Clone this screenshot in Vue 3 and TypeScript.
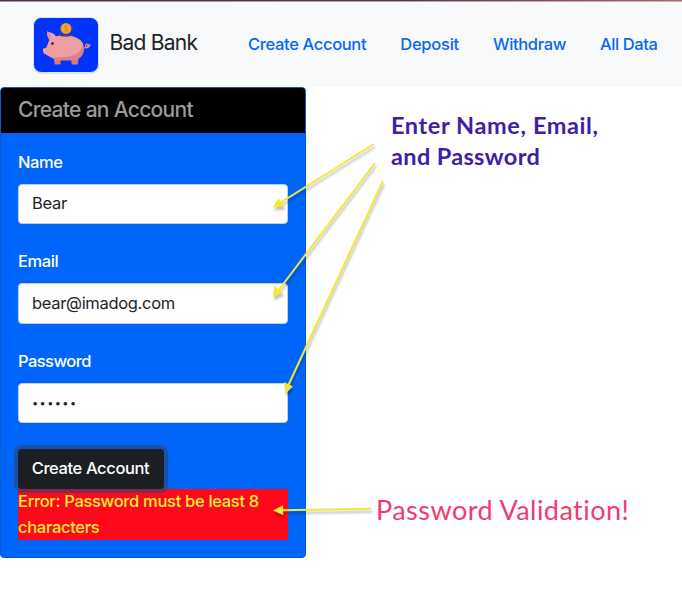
<script setup lang="ts">
import { ref } from 'vue'

interface Link {
  label: string
  cls: string
}
interface Arrow {
  line: number[]
  head: string
}

const links: Link[] = [
  { label: 'Create Account', cls: 'create' },
  { label: 'Deposit', cls: 'deposit' },
  { label: 'Withdraw', cls: 'withdraw' },
  { label: 'All Data', cls: 'all' },
]
const name = ref('Bear')
const email = ref('bear@imadog.com')
const password = ref('••••••')

const arrows: Arrow[] = [
  { line: [374, 144, 280, 203], head: '273,207.5 278.5,198 284.5,206.5' },
  { line: [375, 163, 278, 291], head: '273,297.5 274.5,286 283,292.5' },
  { line: [383, 181, 288, 386], head: '285.5,393.5 284,382 293,386.5' },
  { line: [371, 508.7, 281, 510.3], head: '273,510.5 283,505.2 283.3,515.3' },
]
</script>

<template>
  <div class="page">
    <nav class="navbar">
      <a class="brand" href="#">
        <svg class="logo" width="66" height="56" viewBox="0 0 66 56">
          <rect x="0.5" y="0.5" width="65" height="55" rx="8" fill="#0034fa" stroke="#dde3f3" />
          <path d="M50.5 30.5c2 .8 4 .2 4.500-1.500.5-1.500-1.500-2.500-2.300-1-.8 1.300.5 3 2 2.500 1.300-.4 2-1.500 2.500-3M55.500 27.500l1.800 1.300" fill="none" stroke="#e58f9b" stroke-width="1.200" />
          <path d="M20.500 37h7v9.500c0 .8-.5 1-1 1h-4c-.7 0-1-.4-1-1zM38 37h8l-1 9.500c0 .7-.4 1-1 1h-4.500c-.6 0-1-.3-1-1z" fill="#d87983" />
          <path d="M16 24c3-4 8-5.500 15-5.500 12 0 20 4.500 20 13.500 0 7-5 11.500-14 11.500H25c-4 0-6-3-8-5l-5-2c-1.500-.6-2-2-2-5 1.500-.3 3.500-.5 4-2.500z" fill="#d98089" />
          <path d="M16 24c3-4 8-5.500 15-5.500 10 0 17 3.500 19 8.500-1 8-9 13-18 13-7 0-10 .5-13 1l-7-4c-1.500-.6-2-2-2-5 1.500-.3 3.500-.5 4-2.500z" fill="#eda0a3" />
          <path d="M14 14.500c4 .8 7.500 2 9 5l-5.500 5c-2.500-3-3.500-6-3.500-10z" fill="#f0a5aa" />
          <path d="M14 14.500c3 1 4.800 3.500 4.500 6.500l-2 2c-1.800-2.500-2.500-5.500-2.500-8.500z" fill="#e58e98" />
          <circle cx="19.500" cy="26.500" r="1.300" fill="#281b2b" />
          <path d="M26 17.800c4 1.500 9 1.500 13 0" fill="none" stroke="#644250" stroke-width="1.500" />
          <circle cx="33" cy="11.500" r="5.500" fill="#ed9728" />
          <circle cx="33" cy="11.500" r="4" fill="#f5a938" />
          <path d="M34.700 9.700c-1-1.200-3.300-.9-3.300.5 0 1.600 3.400.9 3.400 2.500 0 1.500-2.600 1.700-3.700.3M33 8v7" fill="none" stroke="#d57b24" stroke-width=".7" />
          <path d="M39.500 9v5M27 15v2.500" stroke="#314e8d" stroke-width=".8" />
        </svg>
        <span class="brand-name">Bad Bank</span>
      </a>
      <a v-for="l in links" :key="l.label" class="link" :class="l.cls" href="#">{{ l.label }}</a>
    </nav>

    <section class="card">
      <header class="card-header">Create an Account</header>
      <div class="card-body">
        <label class="label">Name</label>
        <input v-model="name" class="field" />
        <label class="label">Email</label>
        <input v-model="email" class="field f-email" />
        <label class="label l-pass">Password</label>
        <input v-model="password" class="field f-pass" />
        <button class="submit">Create Account</button>
        <div class="error">Error: Password must be least 8<br />characters</div>
      </div>
    </section>

    <svg class="arrows" width="682" height="600" viewBox="0 0 682 600">
      <g v-for="(a, i) in arrows" :key="i" class="arrow">
        <line :x1="a.line[0]" :y1="a.line[1]" :x2="a.line[2]" :y2="a.line[3]" />
        <polygon :points="a.head" />
      </g>
    </svg>
    <div class="note note-fields">Enter Name, Email,<br /><span class="n2">and Password</span></div>
    <div class="note note-validation">Password Validation!</div>
  </div>
</template>

<style>
body {
  margin: 0;
  background: #fff;
}
</style>

<style scoped>
.page {
  position: relative;
  width: 682px;
  height: 600px;
  overflow: hidden;
  font-family: Inter, 'Liberation Sans', sans-serif;
  font-size: 16.5px;
  line-height: 25.2px;
}
.navbar {
  box-sizing: border-box;
  height: 87px;
  padding: 2px 0 0 33px;
  display: flex;
  align-items: center;
  background: linear-gradient(90deg, #263d6c, #37416e 60%, #8b7485) 0 0 / 100% 1px no-repeat,
    linear-gradient(90deg, #c78283, #efa596) 0 1px / 100% 1px no-repeat, #f8f9fa;
  white-space: nowrap;
}
.brand {
  flex: none;
  display: flex;
  align-items: center;
  width: 215px;
  color: #202327;
  text-decoration: none;
}
.logo {
  flex: none;
  filter: drop-shadow(0 1px 0 rgba(120, 130, 160, 0.2));
}
.brand-name {
  margin: -4px 0 0 10.5px;
  font-size: 21px;
  letter-spacing: -0.75px;
}
.link {
  flex: none;
  margin-right: 34px;
  color: #0866f5;
  text-decoration: none;
  font-weight: 450;
  letter-spacing: -0.34px;
}
.deposit {
  letter-spacing: -0.25px;
}
.all {
  letter-spacing: -0.42px;
}
.card {
  box-sizing: border-box;
  width: 306px;
  height: 471px;
  border: 1px solid #0b59cf;
  border-radius: 4px;
  background: #0066fb;
  color: #fff;
  overflow: hidden;
}
.card-header {
  box-sizing: border-box;
  height: 45px;
  padding: 9px 17px;
  background: #000;
  color: #9b9b9b;
  font-size: 21px;
  font-weight: 500;
  letter-spacing: -0.69px;
}
.card-body {
  padding: 17px 17px 0;
  display: flex;
  flex-direction: column;
  align-items: flex-start;
}
.label {
  height: 25px;
  margin-bottom: 9px;
  font-weight: 500;
  letter-spacing: -0.4px;
}
.l-pass {
  letter-spacing: -0.56px;
}
.field {
  box-sizing: border-box;
  width: 270px;
  height: 40px;
  margin: 0 0 25px;
  padding: 0 13px 2px;
  border: 1px solid #c6d0dd;
  border-radius: 4px;
  outline: 0;
  background: #fff;
  color: #212529;
  font: inherit;
  letter-spacing: -0.32px;
}
.f-email {
  height: 41px;
}
.f-pass {
  margin-bottom: 26px;
  padding: 0 13px;
  font-size: 11px;
  letter-spacing: 1.4px;
}
.submit {
  position: relative;
  box-sizing: border-box;
  width: 146px;
  height: 40px;
  padding: 0 1px 0 0;
  border: 0;
  border-radius: 4px;
  box-shadow: 0 0 0 4px rgba(46, 65, 94, 0.58);
  background: #1b1f23;
  color: #fff;
  font: inherit;
  font-weight: 500;
  letter-spacing: -0.38px;
}
.error {
  width: 270px;
  height: 51px;
  background: #ff081c;
  color: #ffee2e;
  font-weight: 500;
  line-height: 25.5px;
  letter-spacing: -0.31px;
  white-space: nowrap;
}
.arrows {
  position: absolute;
  left: 0;
  top: 0;
  pointer-events: none;
}
.arrow {
  fill: #f4e736;
  stroke: #f4e736;
  filter: drop-shadow(1px 3px 1px rgba(0, 0, 0, 0.25));
}
.arrow line {
  stroke-width: 2;
}
.arrow polygon {
  stroke: none;
}
.note {
  position: absolute;
  white-space: nowrap;
}
.note-fields {
  left: 391px;
  top: 109.5px;
  color: #421da4;
  font: 700 23.5px/31px Lato, sans-serif;
  letter-spacing: 0.6px;
}
.n2 {
  letter-spacing: 0.35px;
}
.note-validation {
  left: 376px;
  top: 493px;
  color: #f03b72;
  font: 400 27px/34px Lato, sans-serif;
  letter-spacing: 0.46px;
}
</style>
